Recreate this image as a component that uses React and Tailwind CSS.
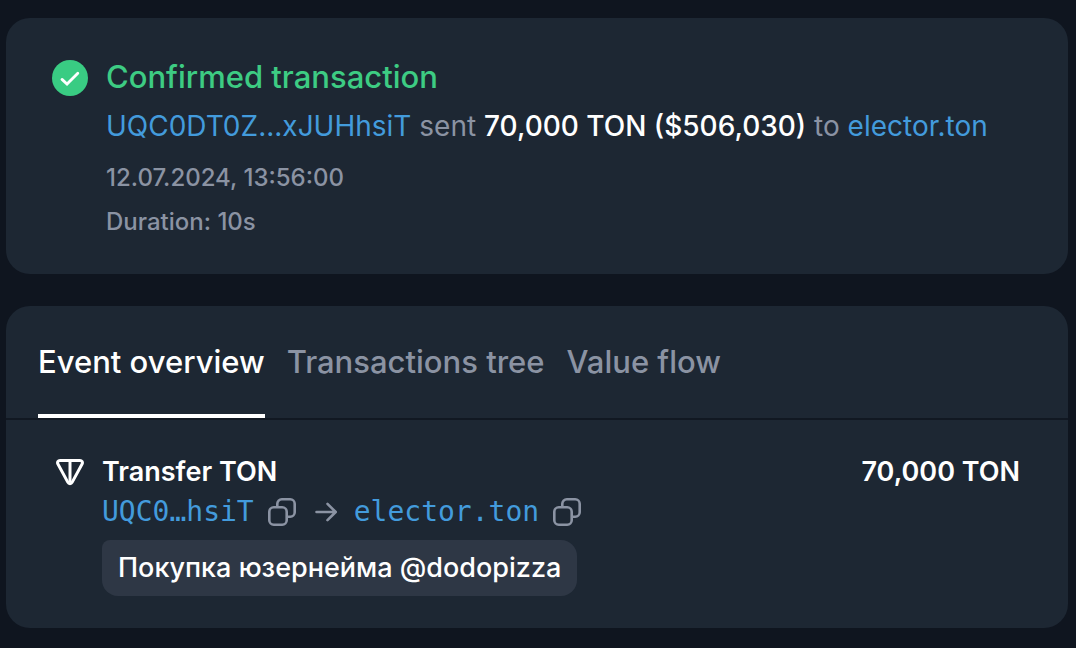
import { useState } from "react";

const tabs = ["Event overview", "Transactions tree", "Value flow"];

const CheckIcon = () => (
  <svg viewBox="0 0 36 36" fill="none" className="mt-[2px] size-9 shrink-0">
    <circle cx="18" cy="18" r="18" fill="#39cc83" />
    <path d="M10 19.4l5 4.6L25.8 13.2" stroke="#fff" strokeWidth="2.8" strokeLinecap="round" />
  </svg>
);

const TonIcon = () => (
  <svg viewBox="0 0 28 28" fill="none" stroke="#fff" strokeWidth="3" strokeLinejoin="round" className="size-7 shrink-0">
    <path d="M4 2.4h20c1.9 0 3 2 2.1 3.6L16.1 24.4c-.9 1.7-3.3 1.7-4.2 0L1.9 6C1 4.4 2.1 2.4 4 2.4z" />
    <path d="M14 2.4v22" />
  </svg>
);

const CopyIcon = () => (
  <svg viewBox="0 0 28 28" fill="none" stroke="currentColor" strokeWidth="2.6" strokeLinejoin="round" className="size-7">
    <rect x="1.3" y="9.3" width="17.4" height="17.4" rx="4.5" />
    <path d="M9.3 9.3V5.8a4.5 4.5 0 0 1 4.5-4.5h8.4a4.5 4.5 0 0 1 4.5 4.5v8.4a4.5 4.5 0 0 1-4.5 4.5h-3.5" />
  </svg>
);

const ArrowIcon = () => (
  <svg viewBox="0 0 24 24" fill="none" stroke="#8b93a3" strokeWidth="2.6" strokeLinecap="round" strokeLinejoin="round" className="size-6 shrink-0">
    <path d="M3.5 12h19M14.5 3.8l8.2 8.2-8.2 8.2" />
  </svg>
);

const Address = ({ name }) => (
  <span className="flex items-center gap-[14px]">
    <a href="#" className="font-['DejaVu_Sans_Mono',monospace] text-[28px] text-[#439bdc]">{name}</a>
    <button type="button" aria-label="Copy address" className="text-[#8b93a3]">
      <CopyIcon />
    </button>
  </span>
);

const App = () => {
  const [activeTab, setActiveTab] = useState(tabs[0]);

  return (
    <main className="min-h-screen bg-[#0f151f] pt-[18px] pr-2 pb-5 pl-[6px] font-['Inter',sans-serif] text-[27px] leading-10 text-white">
      <section className="flex gap-[18px] rounded-3xl bg-[#1d2733] px-[46px] pt-10 pb-[30px]">
        <CheckIcon />
        <div className="min-w-0 flex-1">
          <h1 className="text-[31px] leading-[38px] font-medium text-[#3dcc83]">Confirmed transaction</h1>
          <p className="mt-[10px] text-[28px] text-[#8b93a3]">
            <a href="#" className="text-[#439bdc]">UQC0DT0Z...xJUHhsiT</a> sent{" "}
            <span className="font-medium text-white">70,000 TON ($506,030)</span> to{" "}
            <a href="#" className="text-[#439bdc]">elector.ton</a>
          </p>
          <div className="mt-[10px] text-[24px] leading-[44px] font-medium text-[#8b93a3]">
            <p>12.07.2024, 13:56:00</p>
            <p>Duration: 10s</p>
          </div>
        </div>
      </section>

      <section className="mt-8 rounded-3xl bg-[#1d2733]">
        <nav className="flex gap-[22px] border-b-2 border-[#111822] px-8">
          {tabs.map((tab) => (
            <button
              key={tab}
              type="button"
              onClick={() => setActiveTab(tab)}
              className={`border-b-4 pt-9 pb-8 text-[31px] font-medium ${
                tab === activeTab ? "border-white text-white" : "border-transparent text-[#8b93a3]"
              }`}
            >
              {tab}
            </button>
          ))}
        </nav>

        <div className="flex gap-[18px] pt-8 pr-12 pb-8 pl-[50px]">
          <div className="flex h-10 items-center">
            <TonIcon />
          </div>
          <div className="min-w-0 flex-1">
            <div className="flex justify-between font-semibold">
              <h2>Transfer TON</h2>
              <span>70,000 TON</span>
            </div>
            <div className="flex items-center gap-[17px]">
              <Address name="UQC0…hsiT" />
              <ArrowIcon />
              <Address name="elector.ton" />
            </div>
            <p className="mt-2 w-fit rounded-2xl rounded-tl-lg bg-[#2e3745] px-4 py-2 font-medium">Покупка юзернейма @dodopizza</p>
          </div>
        </div>
      </section>
    </main>
  );
};

export default App;
